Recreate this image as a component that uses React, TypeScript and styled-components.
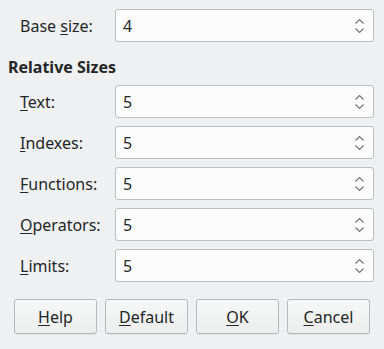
import React from 'react';
import styled, { createGlobalStyle } from 'styled-components';

const GlobalStyle = createGlobalStyle`
  html, body {
    margin: 0;
    padding: 0;
    background: #eff0f1;
  }
  body {
    font-family: 'Noto Sans', 'DejaVu Sans', sans-serif;
    font-size: 16px;
    color: #232627;
  }
`;

interface IRow {
  label: string;
  mnemonic: number;
  value: string;
}

const sizes: IRow[] = [
  { label: 'Text:', mnemonic: 0, value: '5' },
  { label: 'Indexes:', mnemonic: 0, value: '5' },
  { label: 'Functions:', mnemonic: 0, value: '5' },
  { label: 'Operators:', mnemonic: 0, value: '5' },
  { label: 'Limits:', mnemonic: 0, value: '5' },
];

const buttons: IRow[] = [
  { label: 'Help', mnemonic: 0, value: '' },
  { label: 'Default', mnemonic: 0, value: '' },
  { label: 'OK', mnemonic: 0, value: '' },
  { label: 'Cancel', mnemonic: 0, value: '' },
];

const Mnemonic = ({ text, index }: { text: string; index: number }) => (
  <>
    {text.slice(0, index)}
    <u>{text.charAt(index)}</u>
    {text.slice(index + 1)}
  </>
);

const SpinArrows = () => (
  <svg width="11" height="16" viewBox="0 0 11 16" fill="none" stroke="#6e7173" strokeWidth="1.1">
    <path d="M1.5 5.5 L5.5 1.5 L9.5 5.5" />
    <path d="M1.5 10.5 L5.5 14.5 L9.5 10.5" />
  </svg>
);

const SpinBox = ({ value }: { value: string }) => (
  <Field>
    <FieldValue>{value}</FieldValue>
    <Arrows>
      <SpinArrows />
    </Arrows>
  </Field>
);

const App = () => {
  return (
    <>
      <GlobalStyle />
      <Dialog>
        <FormRow>
          <Label>
            <Mnemonic text="Base size:" index={5} />
          </Label>
          <SpinBox value="4" />
        </FormRow>

        <Heading>Relative Sizes</Heading>

        <SizeList>
          {sizes.map(s => (
            <FormRow key={s.label}>
              <Label>
                <Mnemonic text={s.label} index={s.mnemonic} />
              </Label>
              <SpinBox value={s.value} />
            </FormRow>
          ))}
        </SizeList>

        <ButtonBar>
          {buttons.map(b => (
            <Button key={b.label}>
              <Mnemonic text={b.label} index={b.mnemonic} />
            </Button>
          ))}
        </ButtonBar>
      </Dialog>
    </>
  );
};

const Dialog = styled.div`
  width: 384px;
  height: 349px;
  box-sizing: border-box;
  padding: 9px 10px 0 8px;
  display: flex;
  flex-direction: column;
`;

const FormRow = styled.div`
  display: grid;
  grid-template-columns: 95px 1fr;
  align-items: center;
  padding-left: 12px;
  height: 33px;
`;

const Label = styled.span`
  line-height: 20px;

  u {
    text-decoration-thickness: 1px;
    text-underline-offset: 2px;
  }
`;

const Field = styled.div`
  height: 33px;
  box-sizing: border-box;
  background: #fcfcfc;
  border: 1px solid #bcbebf;
  border-radius: 3px;
  display: flex;
  align-items: center;
  justify-content: space-between;
  padding: 0 8px 0 7px;
`;

const FieldValue = styled.span`
  line-height: 20px;
`;

const Arrows = styled.span`
  display: flex;
  align-items: center;
`;

const Heading = styled.div`
  font-weight: bold;
  line-height: 22px;
  margin: 14px 0 7px 0;
`;

const SizeList = styled.div`
  display: flex;
  flex-direction: column;
  gap: 8px;
`;

const ButtonBar = styled.div`
  display: flex;
  gap: 8px;
  margin: 17px 4px 0 6px;
`;

const Button = styled.button`
  flex: 1;
  height: 35px;
  font-family: 'Noto Sans', 'DejaVu Sans', sans-serif;
  font-size: 16px;
  color: #232627;
  background: linear-gradient(#f6f7f7, #eceded);
  border: 1px solid #b6b8b9;
  border-radius: 3px;
  box-shadow: 0 1px 1px rgba(0, 0, 0, 0.06);
  padding: 0;

  u {
    text-decoration-thickness: 1px;
    text-underline-offset: 2px;
  }
`;

export default App;
